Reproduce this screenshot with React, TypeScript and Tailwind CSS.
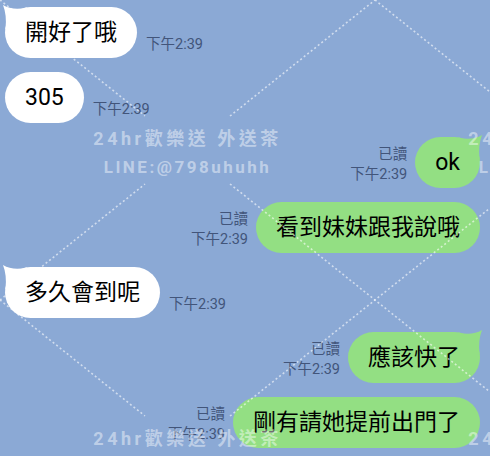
import React from "react";

type Msg = { side: "l" | "r"; text: string; tail?: boolean };

const msgs: Msg[] = [
  { side: "l", text: "開好了哦", tail: true },
  { side: "l", text: "305" },
  { side: "r", text: "ok", tail: true },
  { side: "r", text: "看到妹妹跟我說哦" },
  { side: "l", text: "多久會到呢", tail: true },
  { side: "r", text: "應該快了", tail: true },
  { side: "r", text: "剛有請她提前出門了" },
];

const FONT = "Roboto, 'Noto Sans CJK TC', sans-serif";

function LeftTail() {
  return (
    <svg className="absolute left-0 top-0 overflow-visible" width="24" height="24" viewBox="0 0 24 24">
      <path d="M-2 -2 Q 8 4 22 0.5 L 22 22 L 0.5 22 Q 2 8 -2 -2 Z" fill="#ffffff" />
    </svg>
  );
}

function RightTail() {
  return (
    <svg className="absolute right-0 top-0 overflow-visible" width="24" height="24" viewBox="0 0 24 24">
      <path d="M26 -2 Q 16 4 2 0.5 L 2 22 L 23.5 22 Q 22 8 26 -2 Z" fill="#93df83" />
    </svg>
  );
}

function Watermark() {
  const seg = (x1: number, y1: number, x2: number, y2: number, k: string) => (
    <line key={k} x1={x1} y1={y1} x2={x2} y2={y2} stroke="rgba(255,255,255,0.6)" strokeWidth="1.6" strokeDasharray="2 2.5" />
  );
  const centers = [
    [187.5, 150],
    [562.5, 150],
    [187.5, 450],
    [562.5, 450],
  ];
  return (
    <div className="pointer-events-none absolute inset-0">
      <svg className="absolute inset-0" width="490" height="456" viewBox="0 0 490 456">
        {seg(0, 0, 145, 116, "a1")}
        {seg(230, 184, 490, 392, "a2")}
        {seg(0, 300, 145, 184, "b1")}
        {seg(230, 116, 375, 0, "b2")}
        {seg(375, 0, 490, 92, "c1")}
        {seg(230, 416, 490, 208, "d1")}
        {seg(0, 300, 145, 416, "f1")}
      </svg>
      {centers.map(([x, y], i) => (
        <div
          key={i}
          className="absolute flex w-[240px] -translate-x-1/2 flex-col items-center whitespace-nowrap font-bold leading-[28px] text-white/45"
          style={{ left: x, top: y - 25 }}
        >
          <div className="text-[18px] tracking-[3.5px]">24hr歡樂送 外送茶</div>
          <div className="text-[17px] tracking-[2.5px]">LINE:@798uhuhh</div>
        </div>
      ))}
    </div>
  );
}

export default function App() {
  return (
    <div className="relative h-[456px] w-[490px] overflow-hidden bg-[#8ba9d5]" style={{ fontFamily: FONT }}>
      <div className="flex flex-col gap-[14px] pt-[7px]">
        {msgs.map((m, i) =>
          m.side === "l" ? (
            <div key={i} className="flex items-end gap-[9px] pl-[5px]">
              <div className="relative flex h-[51px] items-center rounded-full bg-white px-5 text-[23px] leading-none text-black">
                {m.tail && <LeftTail />}
                <span className="relative">{m.text}</span>
              </div>
              <div className="mb-[3px] text-[14.5px] leading-[20px] text-[#42557a]">下午2:39</div>
            </div>
          ) : (
            <div key={i} className="flex items-end justify-end gap-[8px] pr-[10px]">
              <div className="mb-[3px] flex flex-col items-end text-[14.5px] leading-[20px] text-[#42557a]">
                <div>已讀</div>
                <div>下午2:39</div>
              </div>
              <div className="relative flex h-[51px] items-center rounded-full bg-[#93df83] px-5 text-[23px] leading-none text-black">
                {m.tail && <RightTail />}
                <span className="relative">{m.text}</span>
              </div>
            </div>
          )
        )}
      </div>
      <Watermark />
    </div>
  );
}
